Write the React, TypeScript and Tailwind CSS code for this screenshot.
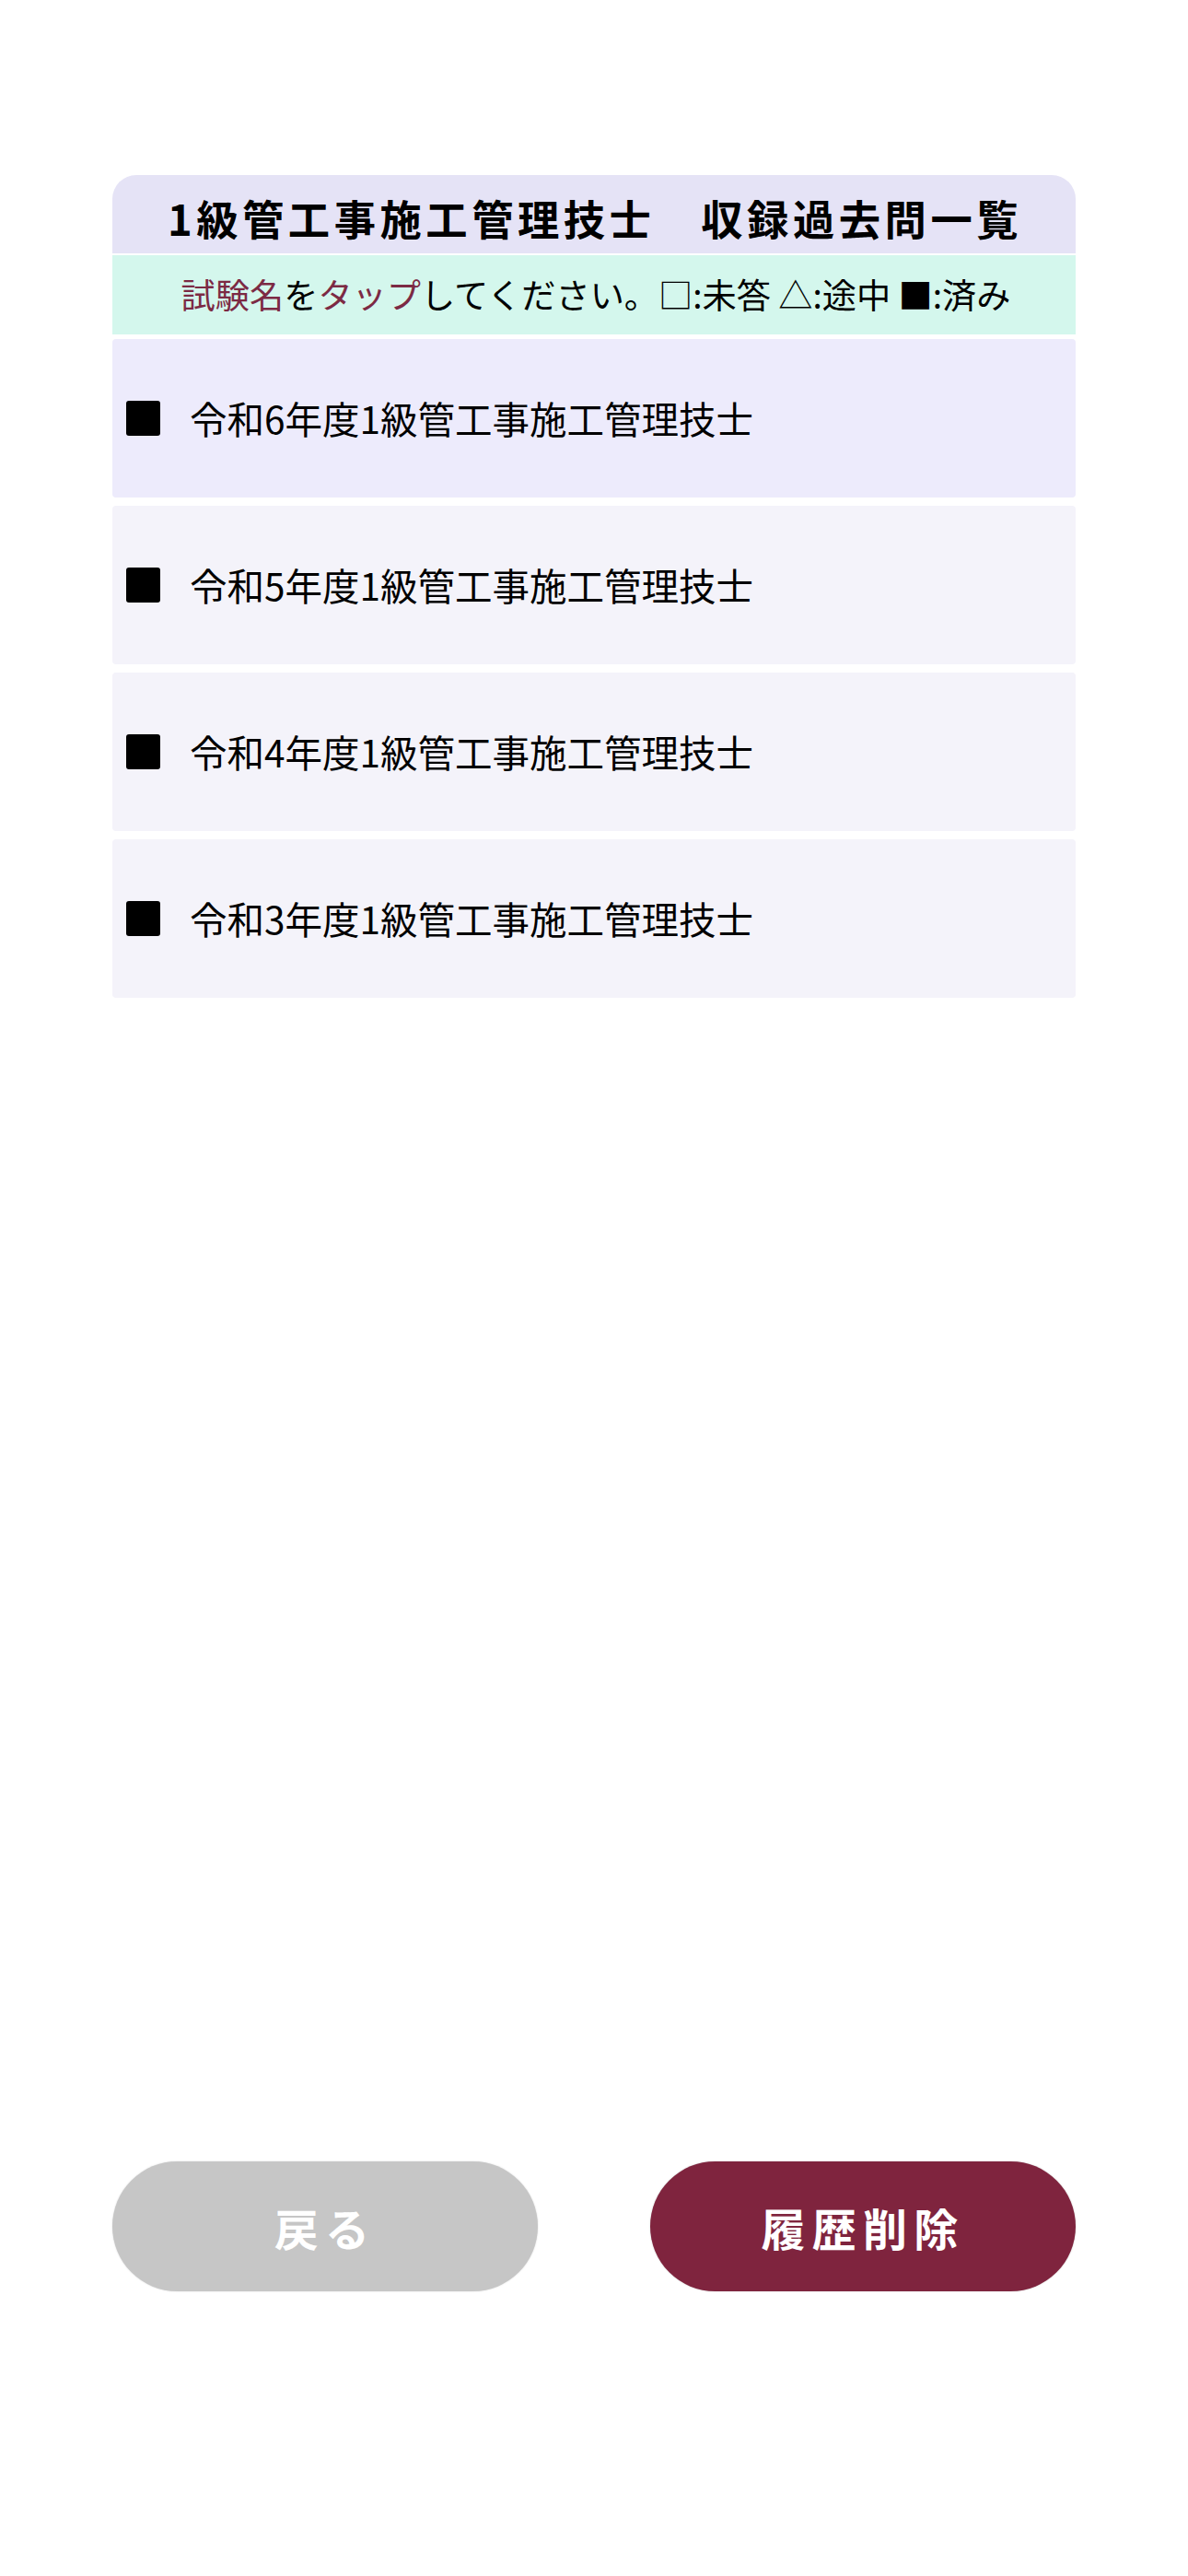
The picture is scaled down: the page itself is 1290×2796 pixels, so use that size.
import React from "react";

const rows = [
  { label: "令和6年度1級管工事施工管理技士", active: true },
  { label: "令和5年度1級管工事施工管理技士", active: false },
  { label: "令和4年度1級管工事施工管理技士", active: false },
  { label: "令和3年度1級管工事施工管理技士", active: false },
];

export default function App() {
  return (
    <div
      className="w-full min-h-[2796px] bg-white flex flex-col text-black"
      style={{ fontFamily: '"Noto Sans CJK JP", "Noto Sans", sans-serif' }}
    >
      <div className="pt-[190px] px-[122px]">
        <div className="h-[85px] rounded-t-[26px] bg-[#e5e3f6] flex items-center justify-center">
          <span className="text-[45.3px] font-bold tracking-[0.1em] leading-none pl-[2px] pt-[8px]">
            1級管工事施工管理技士　収録過去問一覧
          </span>
        </div>
        <div className="mt-[2px] h-[86px] bg-[#d4f7ed] flex items-center justify-center">
          <span className="text-[37.2px] leading-none pl-[4px]">
            <span className="text-[#7c2a44]">試験名</span>を
            <span className="text-[#7c2a44]">タップ</span>してください。□:未答 △:途中 ■:済み
          </span>
        </div>
        <div className="mt-[5px] flex flex-col gap-[9px]">
          {rows.map((r) => (
            <div
              key={r.label}
              className={
                r.active
                  ? "h-[172px] rounded-[4px] bg-[#edebfc] flex items-center pl-[15px]"
                  : "h-[172px] rounded-[4px] bg-[#f4f3fa] flex items-center pl-[15px]"
              }
            >
              <div className="w-[37px] h-[38px] bg-black rounded-[3px] shrink-0" />
              <span className="ml-[32px] text-[40.5px] leading-none">{r.label}</span>
            </div>
          ))}
        </div>
      </div>
      <div className="flex-1" />
      <div className="px-[122px] pb-[309px] flex justify-between">
        <button className="w-[462px] h-[141px] rounded-full bg-[#c6c6c6] text-white text-[48px] font-bold tracking-[0.15em] shadow-[0_0_2px_rgba(0,0,0,0.15)] flex items-center justify-center">
          戻る
        </button>
        <button className="w-[462px] h-[141px] rounded-full bg-[#7f243e] text-white text-[48px] font-bold tracking-[0.15em] shadow-[0_0_2px_rgba(0,0,0,0.2)] flex items-center justify-center">
          履歴削除
        </button>
      </div>
    </div>
  );
}
